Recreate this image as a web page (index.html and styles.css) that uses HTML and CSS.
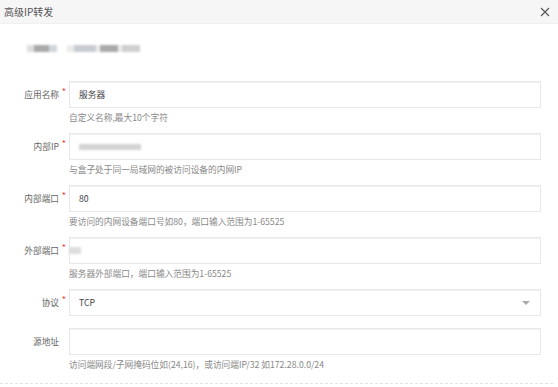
FILE: index.html
```html
<!DOCTYPE html>
<html lang="zh">
<head>
  <meta charset="UTF-8">
  <title>高级IP转发</title>
  <link rel="stylesheet" href="styles.css">
</head>
<body>
  <div class="head">
    <span class="title">高级IP转发</span>
    <svg class="close" width="10" height="10" viewBox="0 0 10 10"><path d="M1 1L9 9M9 1L1 9" stroke="#555" stroke-width="1.1" fill="none"/></svg>
  </div>

  <div class="device">
    <span class="blur b1"></span>
    <span class="blur b2"></span>
  </div>

  <div class="form">
    <div class="row">
      <label class="req">应用名称</label>
      <div class="field">
        <div class="input">服务器</div>
        <div class="hint">自定义名称,最大10个字符</div>
      </div>
    </div>
    <div class="row">
      <label class="req">内部IP</label>
      <div class="field">
        <div class="input"><span class="blur ip"></span></div>
        <div class="hint">与盒子处于同一局域网的被访问设备的内网IP</div>
      </div>
    </div>
    <div class="row">
      <label class="req">内部端口</label>
      <div class="field">
        <div class="input">80</div>
        <div class="hint">要访问的内网设备端口号如80，端口输入范围为1-65525</div>
      </div>
    </div>
    <div class="row">
      <label class="req">外部端口</label>
      <div class="field">
        <div class="input"><span class="blur port"></span></div>
        <div class="hint">服务器外部端口，端口输入范围为1-65525</div>
      </div>
    </div>
    <div class="row">
      <label class="req">协议</label>
      <div class="field">
        <div class="input select">TCP<span class="caret"></span></div>
      </div>
    </div>
    <div class="row">
      <label>源地址</label>
      <div class="field">
        <div class="input"></div>
        <div class="hint">访问端网段/子网掩码位如(24,16)，或访问端IP/32 如172.28.0.0/24</div>
      </div>
    </div>
  </div>

  <div class="foot"></div>
</body>
</html>
```

FILE: styles.css
```css
body { margin: 0; font-family: "Microsoft YaHei", "Noto Sans CJK SC", "Noto Sans", sans-serif; font-size: 8.7px; color: #333; background: #fff; }
.head { height: 23px; background: #f6f6f6; display: flex; align-items: center; justify-content: space-between; padding: 0 8px 0 4px; border-bottom: 1px solid #f0f0f0; }
.title { color: #555; font-size: 10px; }
.close { display: block; }

.device { display: flex; gap: 10px; padding: 21px 0 0 27px; height: 8px; }
.blur { display: inline-block; height: 7px; background: #c4c4c4; filter: blur(1px); }
.b1 { width: 30px; background: linear-gradient(90deg, #ddd 0 25%, #a9a9a9 25% 75%, #d0d6dc 75%); }
.b2 { width: 73px; background: linear-gradient(90deg, #ececec 0 10%, #c8cbd2 10% 40%, #eee 40% 45%, #a9a9a9 45% 70%, #ececec 70% 75%, #cfcfcf 75%); }

.form { padding-top: 28px; }
.row { display: flex; align-items: flex-start; }
.row label { width: 59px; text-align: right; padding-right: 10px; line-height: 27px; color: #666; font-size: 8.7px; position: relative; }
.row label.req::after { content: "*"; color: #e33; position: absolute; right: 3px; top: -3px; font-size: 9px; }
.field { width: 472px; margin-bottom: 12px; }
.input { height: 25px; border: 1px solid #e8e8e8; box-shadow: inset 0 1px 1px #f2f2f2; padding: 0 9px; line-height: 25px; font-size: 8.7px; color: #444; display: flex; align-items: center; }
.input .ip { width: 62px; height: 6px; background: #d4d4d4; }
.input .port { width: 12px; height: 7px; margin-left: -10px; background: #ddd; }
.select { justify-content: space-between; }
.caret { width: 0; height: 0; border-left: 4px solid transparent; border-right: 4px solid transparent; border-top: 4px solid #aaa; margin-right: 1px; }
.hint { margin-top: 3px; margin-bottom: -4px; line-height: 14px; font-size: 8.7px; color: #888; }

.foot { margin-top: 3px; border-top: 1px dashed #e3e3e3; width: 553px; }
```
